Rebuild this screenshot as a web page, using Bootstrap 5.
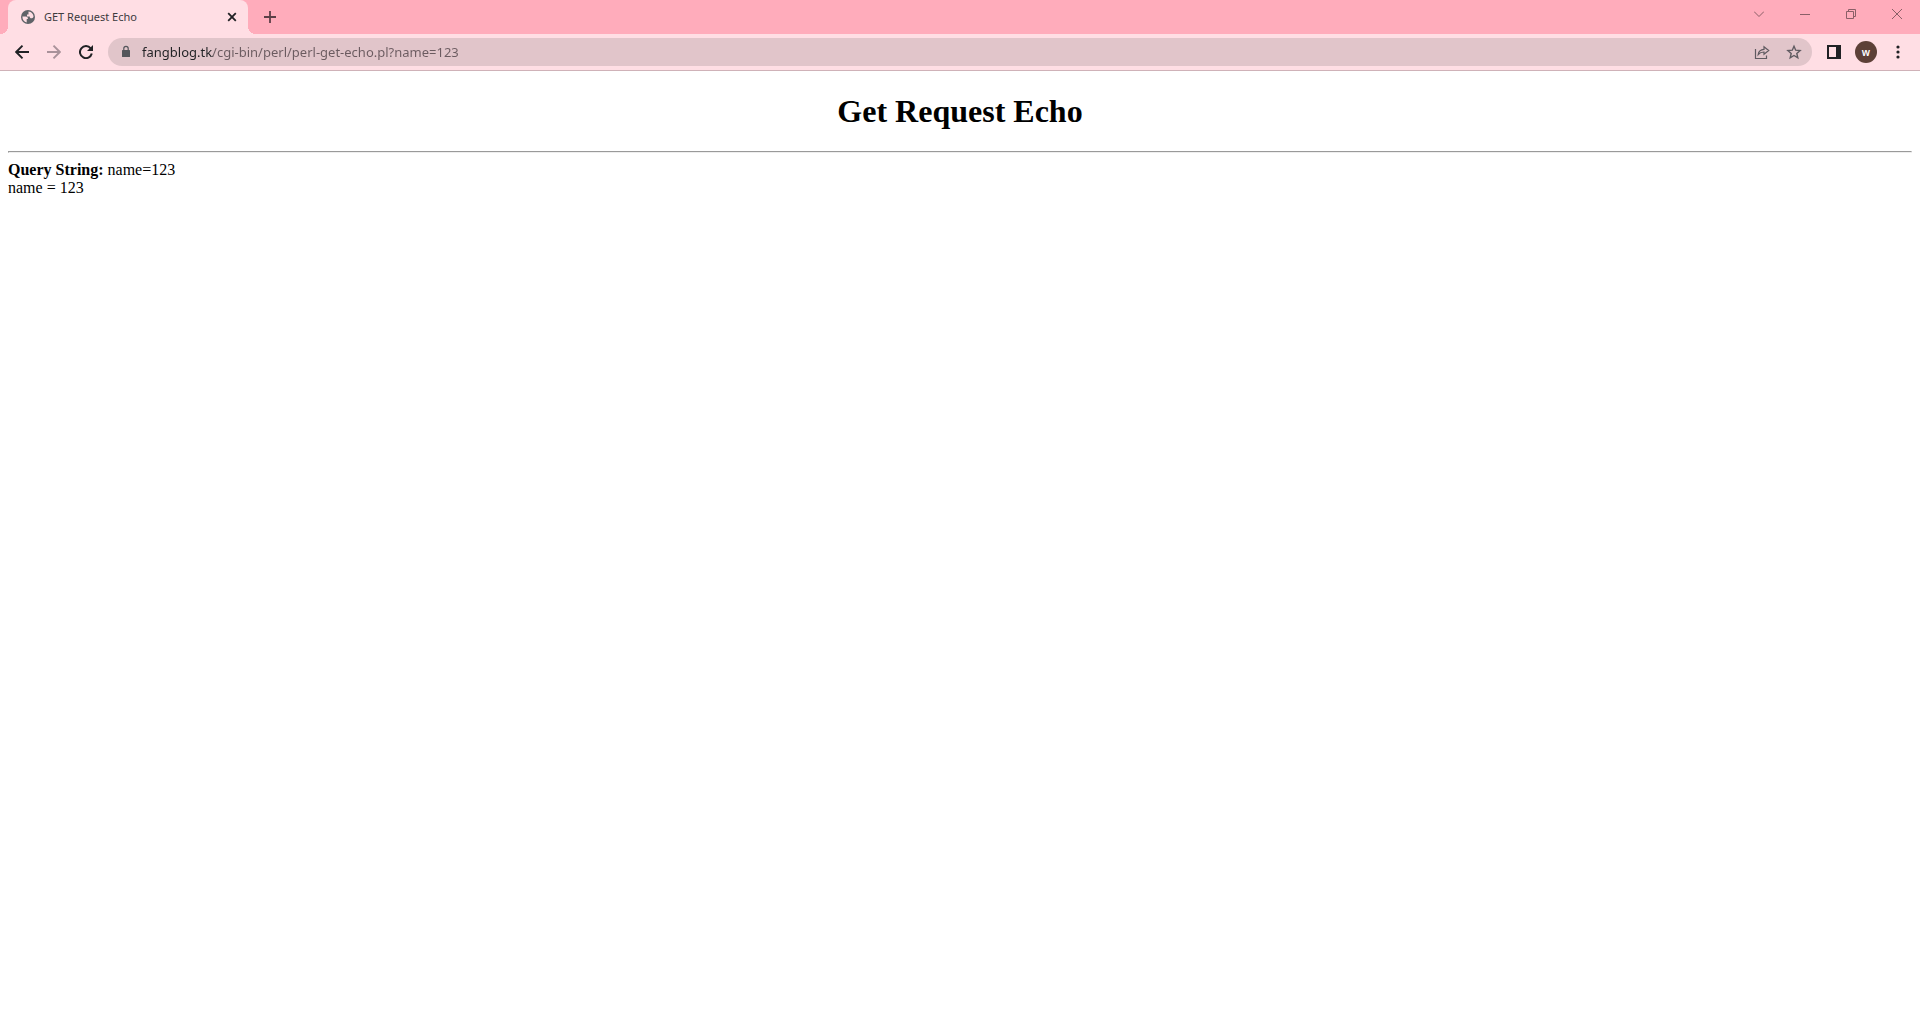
<!DOCTYPE html>
<html lang="en">
<head>
<meta charset="utf-8">
<meta name="viewport" content="width=device-width, initial-scale=1">
<title>GET Request Echo</title>
<link href="https://cdn.jsdelivr.net/npm/bootstrap@5.3.0/dist/css/bootstrap.min.css" rel="stylesheet">
<style>
  :root { --frame: #ffacbb; --bar: #ffdee4; --field: #e1c5ca; --ink: #202124; --soft: #5f5a60; }
  .chrome { font-family: "Noto Sans", "Open Sans", sans-serif; color: var(--ink); }
  .chrome svg { display: block; fill: none; stroke: currentColor; }
  .strip { background: var(--frame); height: 34px; padding-left: 8px; }
  .tab { position: relative; width: 240px; background: var(--bar); border-radius: 8px 8px 0 0; padding: 0 8px 0 12px; }
  .tab::before, .tab::after { content: ""; position: absolute; bottom: 0; width: 8px; height: 8px; }
  .tab::before { left: -8px; background: radial-gradient(circle at 0 0, transparent 8px, var(--bar) 8px); }
  .tab::after { right: -8px; background: radial-gradient(circle at 100% 0, transparent 8px, var(--bar) 8px); }
  .tab-title { font-size: 11px; line-height: 16px; color: #3c3a3e; }
  .tool { width: 28px; height: 28px; padding: 0; border: 0; border-radius: 50%; color: inherit; }
  .tab .tool { width: 16px; height: 16px; }
  .tool.plus { margin-left: 8px; color: #5c3f47; }
  .tool.faded { color: #a9929a; }
  .tool.gray { color: var(--soft); }
  .win { width: 46px; height: 28px; padding: 0; border: 0; border-radius: 0; color: #8a5f67; }
  .toolbar { background: var(--bar); padding: 4px 8px; border-bottom: 1px solid #cfb2b8; }
  .omnibox { background: var(--field); border-radius: 14px; height: 28px; padding: 0 4px 0 10px; color: var(--soft); }
  .address { border: 0; outline: 0; padding: 0; height: 28px; min-width: 0; font-size: 13px;
    color: transparent; background: linear-gradient(90deg, var(--ink) 71px, #6b5b60 71px); -webkit-background-clip: text; background-clip: text; }
  .avatar { width: 22px; height: 22px; background: #5d4037; color: #fff; font-size: 10px; line-height: 22px; font-weight: 600; }
  .sheet { font-family: "Liberation Serif", serif; font-size: 16px; line-height: 18px; color: #000; padding: 21px 8px; }
  .sheet h1 { font-size: 32px; line-height: 38px; font-weight: 700; margin: 0 0 21px; }
  .sheet hr { margin: 0 0 8px; border: 1px solid; border-color: #9a9a9a #eee #eee #9a9a9a; opacity: 1; }
</style>
<script src="https://cdn.jsdelivr.net/npm/bootstrap@5.3.0/dist/js/bootstrap.bundle.min.js"></script>
</head>
<body class="bg-white">
<header class="chrome">
  <div class="strip d-flex">
    <div class="tab d-flex align-items-center gap-2">
      <svg width="16" height="16" viewBox="0 0 16 16" aria-hidden="true"><circle cx="8" cy="8" r="7" fill="#5f6368" stroke="none"/><path d="M2.400 7.600h3.200c1.800 0 2.400 1 2.300 2.400H6.700v3.500C4.200 13 2.300 10.800 2.400 7.600ZM8.500 2.500c2.800.2 5 2.400 5 5.300-.5 1-1.300 1.500-2.300 1.500-1 0-1.500-.7-1.500-1.800H7V5.400h1.500z" fill="#ffdee4" stroke="none"/></svg>
      <span class="tab-title flex-grow-1">GET Request Echo</span>
      <button type="button" class="btn tool d-flex align-items-center justify-content-center" aria-label="Close tab"><svg width="10" height="10" viewBox="0 0 10 10" stroke-width="1.800"><path d="m1.200 1.200 7.600 7.600m0-7.600L1.200 8.800"/></svg></button>
    </div>
    <button type="button" class="btn tool plus d-flex align-items-center justify-content-center align-self-center" aria-label="New tab"><svg width="12" height="12" viewBox="0 0 12 12" stroke-width="1.800"><path d="M6 0v12M0 6h12"/></svg></button>
    <div class="d-flex ms-auto">
      <button type="button" class="btn win d-flex align-items-center justify-content-center" aria-label="Search tabs"><svg width="10" height="10" viewBox="0 0 10 10"><path d="m0 2.500 5 5 5-5"/></svg></button>
      <button type="button" class="btn win d-flex align-items-center justify-content-center" aria-label="Minimize"><svg width="10" height="10" viewBox="0 0 10 10"><path d="M0 5.500h10"/></svg></button>
      <button type="button" class="btn win d-flex align-items-center justify-content-center" aria-label="Restore"><svg width="10" height="10" viewBox="0 0 10 10"><path d="M.5 2.500h7v7h-7zM2.500 2.500v-2h7v7h-2"/></svg></button>
      <button type="button" class="btn win d-flex align-items-center justify-content-center" aria-label="Close"><svg width="10" height="10" viewBox="0 0 10 10"><path d="m0 0 10 10M10 0 0 10"/></svg></button>
    </div>
  </div>
  <div class="toolbar d-flex align-items-center gap-2">
    <nav class="d-flex gap-1" aria-label="History">
      <button type="button" class="btn tool d-flex align-items-center justify-content-center" aria-label="Back"><svg width="14" height="14" viewBox="0 0 14 14" stroke-width="1.900"><path d="M14 7H1.500M7.500.7 1.200 7l6.300 6.300"/></svg></button>
      <button type="button" class="btn tool faded d-flex align-items-center justify-content-center" aria-label="Forward"><svg width="14" height="14" viewBox="0 0 14 14" stroke-width="1.900"><path d="M0 7h12.500M6.500.7 12.800 7l-6.300 6.300"/></svg></button>
      <button type="button" class="btn tool d-flex align-items-center justify-content-center" aria-label="Reload"><svg width="14" height="14" viewBox="0 0 14 14" stroke-width="2"><path d="M11.700 3.400A6 6 0 1 0 12.800 8.600"/><path d="M14 0v6H8z" fill="currentColor" stroke="none"/></svg></button>
    </nav>
    <div class="omnibox d-flex align-items-center flex-grow-1">
      <svg class="me-2" width="16" height="16" viewBox="0 0 16 16" aria-hidden="true"><path d="M4.500 6h7q.5 0 .5.500v6q0 .5-.5.500h-7q-.5 0-.5-.5v-6Q4 6 4.500 6Z" fill="#54565b" stroke="none"/><path d="M5.800 6.500V4.600a2.200 2.200 0 0 1 4.400 0v1.900" stroke="#54565b" stroke-width="1.200"/></svg>
      <input class="address flex-grow-1" type="text" aria-label="Address" value="fangblog.tk/cgi-bin/perl/perl-get-echo.pl?name=123" spellcheck="false">
      <div class="d-flex gap-1">
        <button type="button" class="btn tool gray d-flex align-items-center justify-content-center" aria-label="Share"><svg width="16" height="16" viewBox="0 0 16 16" stroke-width="1.200"><path d="M1.500 5v9.500h11v-3M4.200 10.500C4.600 7.200 6.500 5.700 10 5.400V2.700L14.700 6.500 10 10.300V8C7.500 8 5.700 8.700 4.200 10.500Z"/></svg></button>
        <button type="button" class="btn tool gray d-flex align-items-center justify-content-center" aria-label="Bookmark"><svg width="16" height="16" viewBox="0 0 16 16" stroke-width="1.400"><path d="m8 2.200 1.700 4 4.400.4-3.300 2.900 1 4.300L8 11.500l-3.800 2.300 1-4.300-3.300-2.900 4.400-.4z"/></svg></button>
      </div>
    </div>
    <div class="d-flex gap-1">
      <button type="button" class="btn tool d-flex align-items-center justify-content-center" aria-label="Side panel"><svg width="14" height="14" viewBox="0 0 14 14"><path d="M0 0h14v14H0zM2 2v10h7V2z" fill="currentColor" fill-rule="evenodd" stroke="none"/></svg></button>
      <button type="button" class="btn tool d-flex align-items-center justify-content-center" aria-label="Profile"><span class="avatar rounded-circle text-center">w</span></button>
      <button type="button" class="btn tool d-flex align-items-center justify-content-center" aria-label="Menu"><svg width="4" height="14" viewBox="0 0 4 14"><g fill="currentColor" stroke="none"><circle cx="2" cy="2" r="1.600"/><circle cx="2" cy="7" r="1.600"/><circle cx="2" cy="12" r="1.600"/></g></svg></button>
    </div>
  </div>
</header>
<main class="sheet">
  <h1 class="text-center">Get Request Echo</h1>
  <hr>
  <div><b>Query String:</b> name=123</div>
  <div>name = 123</div>
</main>
</body>
</html>
